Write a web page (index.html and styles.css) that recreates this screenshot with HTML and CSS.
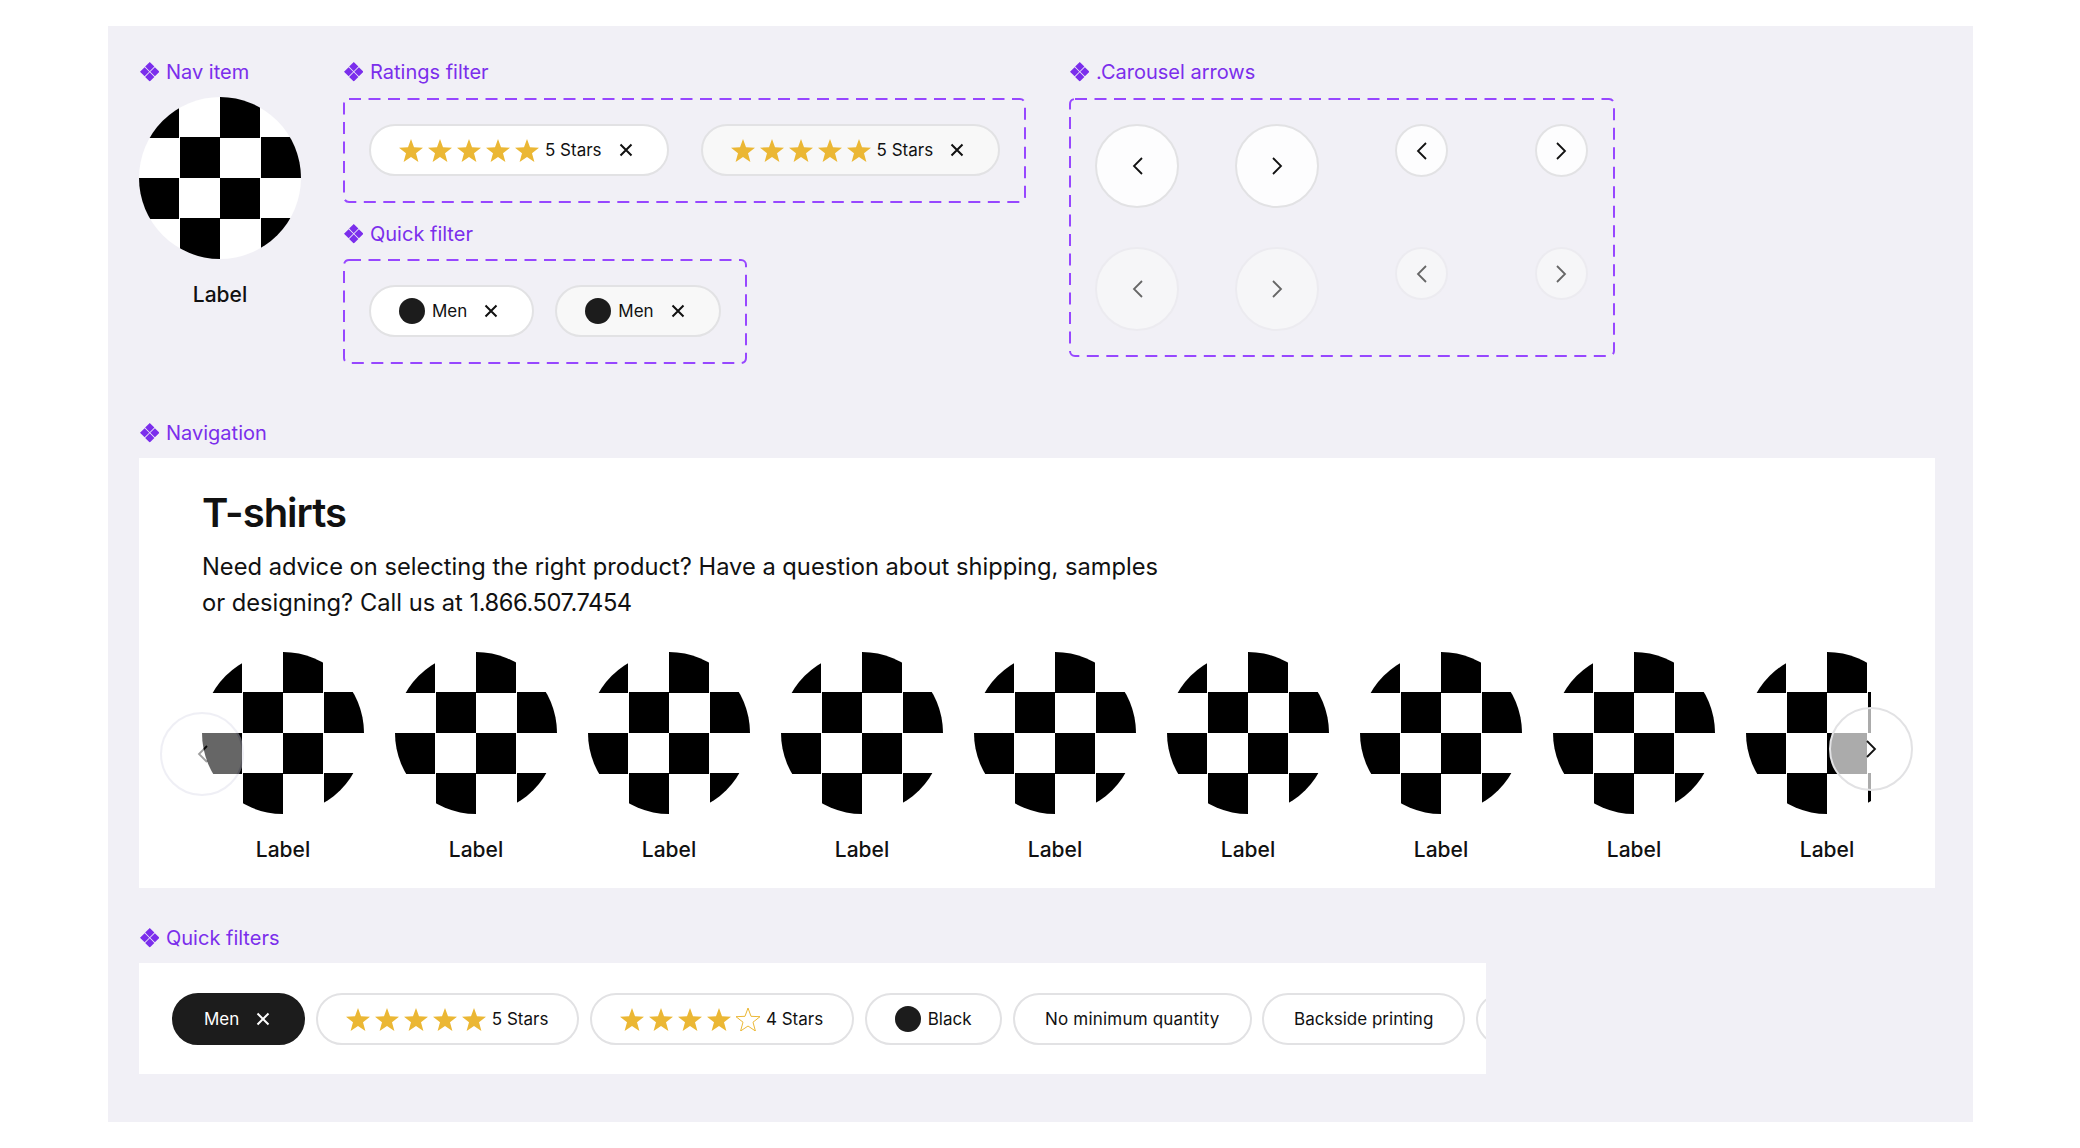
FILE: index.html
```html
<!DOCTYPE html>
<html lang="en">
  <head>
    <meta charset="UTF-8" />
    <meta name="viewport" content="width=device-width, initial-scale=1.0" />
    <link rel="stylesheet" href="styles.css">
    <title>Components</title>
  </head>
  <body>
    <svg class="defs" width="0" height="0">
      <symbol id="comp" viewBox="0 0 19 19">
        <path d="M9.5 0 14 4.5 9.5 9 5 4.5Z M4.5 5 9 9.5 4.5 14 0 9.5Z M14.5 5 19 9.5 14.5 14 10 9.5Z M9.5 10 14 14.5 9.5 19 5 14.5Z" />
      </symbol>
      <symbol id="star" viewBox="0 0 24 23">
        <path d="M12 0 15 8.3 24 8.7 17 14.2 19.4 23 12 18 4.6 23 7 14.2 0 8.7 9 8.3Z" />
      </symbol>
      <symbol id="close" viewBox="0 0 14 14">
        <path d="M1.5 1.5 12.5 12.5M12.5 1.5 1.5 12.5" fill="none" stroke="currentColor" stroke-width="2" />
      </symbol>
      <symbol id="prev" viewBox="0 0 11 18">
        <path d="M10 1 2 9 10 17" fill="none" stroke="currentColor" stroke-width="1.8" />
      </symbol>
      <symbol id="next" viewBox="0 0 11 18">
        <path d="M1 1 9 9 1 17" fill="none" stroke="currentColor" stroke-width="1.8" />
      </symbol>
    </svg>

    <div class="panel">
      <div class="top-row">
        <div class="nav-col">
          <p class="comp-label"><svg><use href="#comp" /></svg>Nav item</p>
          <div class="nav-item">
            <div class="checker"></div>
            <p>Label</p>
          </div>
        </div>

        <div class="filter-col">
          <p class="comp-label"><svg><use href="#comp" /></svg>Ratings filter</p>
          <div class="dash-box">
            <svg class="dash"><rect rx="5" /></svg>
            <div class="chip">
              <span class="stars"><svg><use href="#star" /></svg><svg><use href="#star" /></svg><svg><use href="#star" /></svg><svg><use href="#star" /></svg><svg><use href="#star" /></svg></span>
              <span>5 Stars</span>
              <svg class="x"><use href="#close" /></svg>
            </div>
            <div class="chip hover">
              <span class="stars"><svg><use href="#star" /></svg><svg><use href="#star" /></svg><svg><use href="#star" /></svg><svg><use href="#star" /></svg><svg><use href="#star" /></svg></span>
              <span>5 Stars</span>
              <svg class="x"><use href="#close" /></svg>
            </div>
          </div>

          <p class="comp-label second"><svg><use href="#comp" /></svg>Quick filter</p>
          <div class="dash-box narrow">
            <svg class="dash"><rect rx="5" /></svg>
            <div class="chip">
              <span class="dot"></span>
              <span>Men</span>
              <svg class="x"><use href="#close" /></svg>
            </div>
            <div class="chip hover">
              <span class="dot"></span>
              <span>Men</span>
              <svg class="x"><use href="#close" /></svg>
            </div>
          </div>
        </div>

        <div class="arrows-col">
          <p class="comp-label"><svg><use href="#comp" /></svg>.Carousel arrows</p>
          <div class="dash-box arrows">
            <svg class="dash"><rect rx="5" /></svg>
            <div class="arrow big"><svg><use href="#prev" /></svg></div>
            <div class="arrow big"><svg><use href="#next" /></svg></div>
            <div class="arrow small"><svg><use href="#prev" /></svg></div>
            <div class="arrow small"><svg><use href="#next" /></svg></div>
            <div class="arrow big off"><svg><use href="#prev" /></svg></div>
            <div class="arrow big off"><svg><use href="#next" /></svg></div>
            <div class="arrow small off"><svg><use href="#prev" /></svg></div>
            <div class="arrow small off"><svg><use href="#next" /></svg></div>
          </div>
        </div>
      </div>

      <p class="comp-label nav-title"><svg><use href="#comp" /></svg>Navigation</p>
      <div class="card">
        <h1>T-shirts</h1>
        <p class="intro">Need advice on selecting the right product? Have a question about shipping, samples<br>or designing? Call us at <span class="phone">1.866.507.7454</span></p>
        <div class="carousel">
          <div class="track">
            <div class="nav-item"><div class="checker"></div><p>Label</p></div>
            <div class="nav-item"><div class="checker"></div><p>Label</p></div>
            <div class="nav-item"><div class="checker"></div><p>Label</p></div>
            <div class="nav-item"><div class="checker"></div><p>Label</p></div>
            <div class="nav-item"><div class="checker"></div><p>Label</p></div>
            <div class="nav-item"><div class="checker"></div><p>Label</p></div>
            <div class="nav-item"><div class="checker"></div><p>Label</p></div>
            <div class="nav-item"><div class="checker"></div><p>Label</p></div>
            <div class="nav-item"><div class="checker"></div><p>Label</p></div>
          </div>
          <div class="arrow big over-left"><svg><use href="#prev" /></svg></div>
          <div class="arrow big over-right"><svg><use href="#next" /></svg></div>
        </div>
      </div>

      <p class="comp-label filters-title"><svg><use href="#comp" /></svg>Quick filters</p>
      <div class="filters">
        <div class="chip dark">
          <span>Men</span>
          <svg class="x"><use href="#close" /></svg>
        </div>
        <div class="chip">
          <span class="stars"><svg><use href="#star" /></svg><svg><use href="#star" /></svg><svg><use href="#star" /></svg><svg><use href="#star" /></svg><svg><use href="#star" /></svg></span>
          <span>5 Stars</span>
        </div>
        <div class="chip">
          <span class="stars"><svg><use href="#star" /></svg><svg><use href="#star" /></svg><svg><use href="#star" /></svg><svg><use href="#star" /></svg><svg class="empty"><use href="#star" /></svg></span>
          <span>4 Stars</span>
        </div>
        <div class="chip">
          <span class="dot"></span>
          <span>Black</span>
        </div>
        <div class="chip text wide">No minimum quantity</div>
        <div class="chip text">Backside printing</div>
        <div class="chip text cut"></div>
      </div>
    </div>
  </body>
</html>
```

FILE: styles.css
```css
body {
  margin: 0;
  background-color: #fff;
  font-family: Inter, "Liberation Sans", sans-serif;
  color: #111;
}

p {
  margin: 0;
}

.defs {
  position: absolute;
}

.panel {
  box-sizing: border-box;
  margin: 26px 107px 0 108px;
  height: 1096px;
  padding: 34px 38px 0 31px;
  background-color: #f1f0f6;
}

/* component names */
.comp-label {
  display: flex;
  align-items: center;
  gap: 7px;
  height: 24px;
  margin-bottom: 14px;
  font-size: 20px;
  line-height: 24px;
  color: #7b2eec;
}

.comp-label svg {
  width: 19.5px;
  height: 19.5px;
  margin-left: 0.5px;
  fill: #7b2eec;
}

.comp-label.second {
  margin-top: 19px;
  margin-bottom: 13px;
}

.comp-label.nav-title {
  margin-top: 57px;
  margin-bottom: 13px;
}

.comp-label.filters-title {
  margin-top: 38px;
  margin-bottom: 13px;
}

.top-row {
  display: flex;
}

.nav-col {
  width: 162px;
  margin-right: 42px;
}

.nav-col .comp-label {
  margin-bottom: 13px;
}

.filter-col {
  width: 683px;
  margin-right: 43px;
}

/* checker placeholder */
.checker {
  width: 162px;
  height: 162px;
  border-radius: 50%;
  background-color: #fff;
  background-image: conic-gradient(#fff 25%, #000 0 50%, #fff 0 75%, #000 0);
  background-size: 81px 81px;
}

.nav-item {
  flex-shrink: 0;
  width: 162px;
  text-align: center;
}

.nav-item p {
  margin-top: 24px;
  font-size: 21px;
  line-height: 24px;
  font-weight: 500;
}

/* dashed variant frames */
.dash-box {
  position: relative;
  box-sizing: border-box;
  display: flex;
  gap: 32px;
  height: 105px;
  padding: 26px;
}

.dash-box.narrow {
  width: 404px;
  gap: 21px;
}

.dash {
  position: absolute;
  top: 0;
  left: 0;
  width: 100%;
  height: 100%;
}

.dash rect {
  x: 1px;
  y: 1px;
  width: calc(100% - 2px);
  height: calc(100% - 2px);
  fill: none;
  stroke: #9747ff;
  stroke-width: 2;
  stroke-dasharray: 12 7.5;
}

/* chips */
.chip {
  box-sizing: border-box;
  flex-shrink: 0;
  display: flex;
  align-items: center;
  height: 52px;
  padding: 0 34px 0 28px;
  background-color: #fff;
  border: 2px solid #e2e2e4;
  border-radius: 26px;
  font-size: 17px;
  white-space: nowrap;
}

.chip.hover {
  background-color: #f8f8f8;
}

.filters .chip {
  padding-right: 29px;
}

.filters .chip.dark {
  padding: 0 33px 0 30px;
  background-color: #1c1c1c;
  border-color: #1c1c1c;
  color: #fff;
}

.filters .chip.text {
  padding: 0 30px;
}

.chip.wide {
  letter-spacing: 0.2px;
}

.chip.cut {
  width: 120px;
}

.stars {
  display: flex;
  gap: 5px;
  margin-right: 6px;
  fill: #ebb734;
}

.stars svg {
  width: 24px;
  height: 23px;
}

.stars svg.empty {
  fill: #fff;
  stroke: #ebb734;
  stroke-width: 1;
  overflow: visible;
}

.dot {
  width: 26px;
  height: 26px;
  margin-right: 7px;
  border-radius: 50%;
  background-color: #1c1c1c;
}

.x {
  width: 14px;
  height: 14px;
  margin-left: 17px;
}

/* arrows */
.dash-box.arrows {
  display: grid;
  grid-template-columns: 140px 160px 140px 53px;
  grid-auto-rows: 84px;
  gap: 39px 0;
  width: 546px;
  height: 259px;
}

.arrow {
  box-sizing: border-box;
  display: flex;
  align-items: center;
  justify-content: center;
  background-color: #fdfdfe;
  border: 2px solid #e2e2e4;
  border-radius: 50%;
  color: #111;
}

.arrow svg {
  width: 11px;
  height: 18px;
}

.arrow.big {
  width: 84px;
  height: 84px;
}

.arrow.small {
  width: 53px;
  height: 53px;
}

.arrow.off {
  background-color: #f6f6f8;
  border-color: #ecebf0;
  color: #666;
}

/* navigation block */
.card {
  box-sizing: border-box;
  height: 430px;
  padding: 31px 64px 0 63px;
  background-color: #fff;
}

.card h1 {
  margin: 0;
  font-size: 40px;
  line-height: 48px;
  font-weight: 600;
  letter-spacing: -1px;
}

.intro {
  margin-top: 12px;
  font-size: 23.7px;
  line-height: 36px;
}

.phone {
  letter-spacing: -0.45px;
}

.carousel {
  position: relative;
  margin-top: 31px;
  width: 1669px;
}

.track {
  display: flex;
  gap: 31px;
  overflow: hidden;
}

.arrow.over-left {
  position: absolute;
  top: 60px;
  left: -42px;
  background-color: #fff;
  border-color: #d8d8e8;
  opacity: 0.4;
}

.arrow.over-right {
  position: absolute;
  top: 55px;
  right: -42px;
  background-color: rgba(255, 255, 255, 0.67);
}

/* quick filter row */
.filters {
  box-sizing: border-box;
  display: flex;
  gap: 10.5px;
  width: 1347px;
  height: 111px;
  padding: 30px 0 0 33px;
  overflow: hidden;
  background-color: #fff;
}
```
